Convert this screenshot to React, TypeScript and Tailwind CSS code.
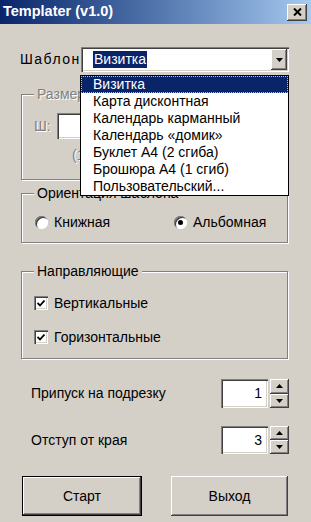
import React from "react";

const raised =
  "bg-[#d4d0c8] shadow-[inset_-1px_-1px_#404040,inset_1px_1px_#ffffff,inset_-2px_-2px_#808080,inset_2px_2px_#d4d0c8]";
const sunken =
  "bg-white shadow-[inset_1px_1px_#808080,inset_2px_2px_#404040,inset_-1px_-1px_#ffffff,inset_-2px_-2px_#d4d0c8]";

const templates = [
  "Визитка",
  "Карта дисконтная",
  "Календарь карманный",
  "Календарь «домик»",
  "Буклет А4 (2 сгиба)",
  "Брошюра А4 (1 сгиб)",
  "Пользовательский...",
];

const ArrowDown = () => (
  <svg width="7" height="4" viewBox="0 0 7 4">
    <path d="M0 0h7L3.5 4z" fill="#000" />
  </svg>
);

const ArrowUp = () => (
  <svg width="7" height="4" viewBox="0 0 7 4">
    <path d="M0 4h7L3.5 0z" fill="#000" />
  </svg>
);

const GroupBox: React.FC<{
  title: string;
  disabled?: boolean;
  className?: string;
  children?: React.ReactNode;
}> = ({ title, disabled, className, children }) => (
  <div
    className={
      "relative ml-[21px] w-[267px] border border-[#808080] shadow-[1px_1px_0_#ffffff,inset_1px_1px_0_#ffffff] " +
      (className ?? "")
    }
  >
    <span
      className={
        "absolute left-[12px] top-[-9px] bg-[#d4d0c8] px-[3px] leading-[17px] whitespace-nowrap " +
        (disabled ? "text-[#808080] [text-shadow:1px_1px_0_#ffffff]" : "text-black")
      }
    >
      {title}
    </span>
    {children}
  </div>
);

const Radio: React.FC<{ checked?: boolean; label: string }> = ({ checked, label }) => (
  <div className="flex items-center gap-[6px] h-[16px]">
    <div className="w-[13px] h-[13px] rounded-full bg-white shadow-[inset_1px_1px_#808080,inset_2px_2px_#404040,inset_-1px_-1px_#ffffff] flex items-center justify-center">
      {checked && <div className="w-[5px] h-[5px] rounded-full bg-black" />}
    </div>
    <span>{label}</span>
  </div>
);

const Check: React.FC<{ label: string }> = ({ label }) => (
  <div className="flex items-center gap-[6px] h-[16px]">
    <div className={"w-[14px] h-[14px] flex items-center justify-center " + sunken}>
      <svg width="8" height="7" viewBox="0 0 8 7">
        <path d="M0.5 3l2.5 2.5 4.5-5" stroke="#000" strokeWidth="1.8" fill="none" />
      </svg>
    </div>
    <span>{label}</span>
  </div>
);

const Spin: React.FC<{ label: string; value: number; height: string; className?: string }> = ({
  label,
  value,
  height,
  className,
}) => (
  <div className={"flex items-center pl-[31px] pr-[22px] " + (className ?? "")}>
    <span className="flex-1">{label}</span>
    <div className={"w-[47px] flex items-center justify-end pr-[6px] " + height + " " + sunken}>{value}</div>
    <div className={"ml-[2px] w-[19px] flex flex-col " + height}>
      <div className={"flex-1 flex items-center justify-center " + raised}>
        <ArrowUp />
      </div>
      <div className={"flex-1 flex items-center justify-center " + raised}>
        <ArrowDown />
      </div>
    </div>
  </div>
);

export default function App() {
  return (
    <div className="relative w-[311px] h-[522px] overflow-hidden bg-[#d4d0c8] text-[14px] text-black font-['Liberation_Sans',Arial,sans-serif]">
      {/* title bar */}
      <div className="h-[24px] flex items-center justify-between pl-[3px] pr-[4px] bg-linear-to-r from-[#0a246a] to-[#a6caf0]">
        <span className="text-white font-bold text-[14.5px]">Templater (v1.0)</span>
        <div className={"w-[20px] h-[17px] flex items-center justify-center " + raised}>
          <svg width="9" height="8" viewBox="0 0 9 8">
            <path d="M1 0.5l7 7M8 0.5l-7 7" stroke="#000" strokeWidth="2" />
          </svg>
        </div>
      </div>

      {/* template combo */}
      <div className="mt-[23px] flex items-center">
        <span className="ml-[20px] w-[61px] overflow-hidden whitespace-nowrap tracking-[1.5px]">Шаблон</span>
        <div className={"w-[208px] h-[25px] flex items-center pl-[12px] pr-[2px] " + sunken}>
          <span className="bg-[#0a246a] text-white px-[1px] leading-[17px]">Визитка</span>
          <div className="flex-1" />
          <div className={"w-[16px] h-[21px] flex items-center justify-center " + raised}>
            <ArrowDown />
          </div>
        </div>
      </div>

      {/* size (disabled, mostly hidden under the open list) */}
      <GroupBox title="Размер" disabled className="mt-[22px] h-[86px]">
        <div className="flex items-center pl-[12px] pt-[18px] text-[#808080] [text-shadow:1px_1px_0_#ffffff]">
          <span className="w-[23px]">Ш:</span>
          <div className={"w-[60px] h-[26px] " + sunken} />
        </div>
        <div className="pl-[50px] pt-[6px] text-[#808080] [text-shadow:1px_1px_0_#ffffff]">(1</div>
      </GroupBox>

      {/* orientation */}
      <GroupBox title="Ориентация шаблона" className="mt-[13px] h-[50px]">
        <div className="flex pl-[13px] pt-[20px]">
          <div className="w-[139px]">
            <Radio label="Книжная" />
          </div>
          <Radio checked label="Альбомная" />
        </div>
      </GroupBox>

      {/* guides */}
      <GroupBox title="Направляющие" className="mt-[28px] h-[88px]">
        <div className="flex flex-col gap-[18px] pl-[12px] pt-[23px]">
          <Check label="Вертикальные" />
          <Check label="Горизонтальные" />
        </div>
      </GroupBox>

      <Spin label="Припуск на подрезку" value={1} height="h-[29px]" className="mt-[20px]" />
      <Spin label="Отступ от края" value={3} height="h-[28px]" className="mt-[18px]" />

      {/* buttons */}
      <div className="mt-[22px] flex">
        <div className="ml-[22px] w-[120px] h-[40px] border border-black">
          <div className={"w-full h-full flex items-center justify-center " + raised}>Старт</div>
        </div>
        <div className={"ml-[29px] w-[117px] h-[40px] flex items-center justify-center " + raised}>Выход</div>
      </div>

      {/* open dropdown list */}
      <div className="absolute left-[80px] top-[75px] w-[209px] h-[121px] bg-white border border-black">
        {templates.map((t, i) => (
          <div
            key={t}
            className={
              "h-[17px] leading-[15px] pl-[11px] whitespace-nowrap " +
              (i === 0
                ? "bg-[#0a246a] text-white border border-dotted border-[#c0c0c0]"
                : "border border-transparent")
            }
          >
            {t}
          </div>
        ))}
      </div>
    </div>
  );
}
